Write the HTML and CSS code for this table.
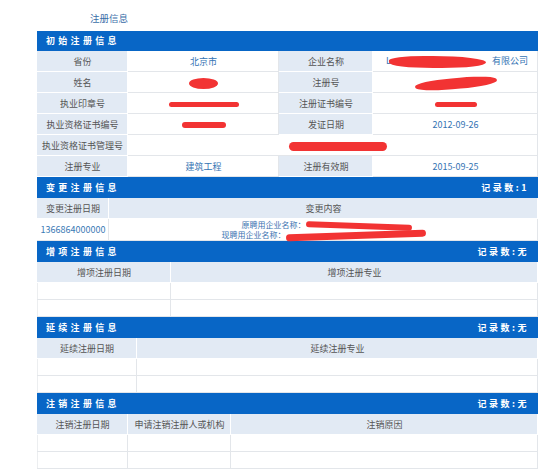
FILE: index.html
```html
<!DOCTYPE html>
<html>
<head>
<meta charset="utf-8">
<link rel="stylesheet" href="styles.css">
</head>
<body>
<div class="page">
  <div class="title">注册信息</div>

  <table class="grid">
    <colgroup><col style="width:91px"><col style="width:151px"><col style="width:94px"><col></colgroup>
    <tr class="head first"><td colspan="4"><span class="h">初始注册信息</span></td></tr>
    <tr class="row"><td class="lab">省份</td><td class="val">北京市</td><td class="lab">企业名称</td><td class="val right"><span class="l">L</span><span class="blob b-corp"></span><span>有限公司</span></td></tr>
    <tr class="row"><td class="lab">姓名</td><td class="val"><span class="blob b-name"></span></td><td class="lab">注册号</td><td class="val"><span class="blob b-reg"></span></td></tr>
    <tr class="row"><td class="lab">执业印章号</td><td class="val"><span class="blob b-seal"></span></td><td class="lab">注册证书编号</td><td class="val"><span class="blob b-cert"></span></td></tr>
    <tr class="row"><td class="lab">执业资格证书编号</td><td class="val"><span class="blob b-qual"></span></td><td class="lab">发证日期</td><td class="val">2012-09-26</td></tr>
    <tr class="row"><td class="lab">执业资格证书管理号</td><td class="val" colspan="3"><span class="blob b-mgmt"></span></td></tr>
    <tr class="row"><td class="lab">注册专业</td><td class="val">建筑工程</td><td class="lab">注册有效期</td><td class="val">2015-09-25</td></tr>
  </table>

  <table class="grid">
    <colgroup><col style="width:72px"><col></colgroup>
    <tr class="head"><td colspan="2"><span class="h">变更注册信息</span><span class="cnt">记录数:1</span></td></tr>
    <tr class="row lab-row"><td>变更注册日期</td><td>变更内容</td></tr>
    <tr class="row tall"><td class="val date">1366864000000</td><td class="val change">
      <div class="line l1">原聘用企业名称：<span class="blob b-old"></span></div>
      <div class="line l2">现聘用企业名称：<span class="blob b-new"></span></div>
    </td></tr>
  </table>

  <table class="grid">
    <colgroup><col style="width:134px"><col></colgroup>
    <tr class="head"><td colspan="2"><span class="h">增项注册信息</span><span class="cnt">记录数:无</span></td></tr>
    <tr class="row lab-row"><td>增项注册日期</td><td>增项注册专业</td></tr>
    <tr class="empty"><td></td><td></td></tr>
    <tr class="empty"><td></td><td></td></tr>
  </table>

  <table class="grid">
    <colgroup><col style="width:100px"><col></colgroup>
    <tr class="head"><td colspan="2"><span class="h">延续注册信息</span><span class="cnt">记录数:无</span></td></tr>
    <tr class="row lab-row"><td>延续注册日期</td><td>延续注册专业</td></tr>
    <tr class="empty"><td></td><td></td></tr>
    <tr class="empty"><td></td><td></td></tr>
  </table>

  <table class="grid">
    <colgroup><col style="width:91px"><col style="width:103px"><col></colgroup>
    <tr class="head"><td colspan="3"><span class="h">注销注册信息</span><span class="cnt">记录数:无</span></td></tr>
    <tr class="row lab-row"><td>注销注册日期</td><td>申请注销注册人或机构</td><td>注销原因</td></tr>
    <tr class="empty"><td></td><td></td><td></td></tr>
    <tr class="empty"><td></td><td></td><td></td></tr>
  </table>
</div>
</body>
</html>
```

FILE: styles.css
```css
html, body {
  margin: 0;
  padding: 0;
  background: #fff;
}
body {
  font-family: "Noto Sans CJK SC", "Noto Sans", sans-serif;
  font-size: 9px;
  color: #555;
}
.page {
  padding-left: 37px;
  width: 501px;
}
.title {
  height: 31px;
  box-sizing: border-box;
  padding-top: 12px;
  padding-left: 53px;
  line-height: 12px;
  color: #3a6ea8;
  font-size: 9.5px;
}
.grid {
  width: 501px;
  border-collapse: separate;
  border-spacing: 0;
  table-layout: fixed;
}
.grid td {
  border: none;
  padding: 0;
  text-align: center;
  vertical-align: middle;
  white-space: nowrap;
  overflow: visible;
  line-height: 12px;
  box-shadow: inset -1px -1px 0 #e3e6ea;
}
.head td {
  background: #0866c6;
  box-shadow: none;
  height: 21px;
  color: #fff;
  font-weight: bold;
  font-size: 9px;
  text-align: left;
  padding: 0 11px 0 9px;
}
.head.first td {
  height: 20px;
}
.head .h {
  letter-spacing: 3.3px;
}
.head .cnt {
  float: right;
  letter-spacing: 2.5px;
  margin-right: -2px;
}
.row td {
  height: 21px;
}
.row.tall td {
  height: 22px;
}
.grid .lab,
.grid .lab-row td {
  background: #e2eaf4;
  box-shadow: inset -1px -1px 0 #fff;
}
.val {
  color: #3373b3;
  background: #fff;
}
.val.right {
  text-align: right;
  padding-right: 10px;
}
.empty td {
  height: 17px;
}
.grid .empty td:first-child {
  box-shadow: inset -1px -1px 0 #e3e6ea, inset 1px 0 0 #eceef0;
}
.date {
  color: #3a7ab5;
}
.grid .change {
  font-size: 8px;
  line-height: 10px;
  color: #3a72b0;
}
.line {
  height: 10px;
}
.l1 { margin-left: 6px; }
.blob {
  display: inline-block;
  background: #f23333;
  border-radius: 50%;
  vertical-align: middle;
}
.l {
  color: #3373b3;
}
.b-corp { width: 97px; height: 12px; border-radius: 40% 60% 50% 50%; margin: 0 6px 0 -2px; }
.b-name { width: 29px; height: 11px; }
.b-reg { width: 82px; height: 11px; transform: rotate(-5deg); border-radius: 45%; }
.b-seal { width: 70px; height: 5px; border-radius: 3px; }
.b-cert { width: 42px; height: 5px; border-radius: 3px; }
.b-qual { width: 44px; height: 6px; border-radius: 3px; }
.b-mgmt { width: 98px; height: 9px; border-radius: 5px; margin-left: 10px; }
.b-old { width: 106px; height: 6px; border-radius: 4px; transform: rotate(2deg); }
.b-new { width: 140px; height: 7px; border-radius: 5px; transform: rotate(-2deg); }
```
